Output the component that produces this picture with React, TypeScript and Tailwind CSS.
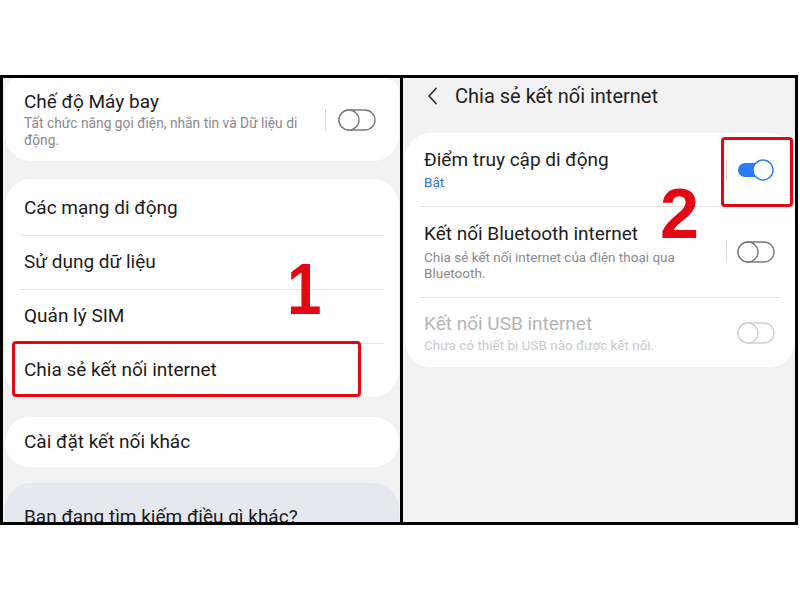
import React from "react";

const RED = "#e30613";

function ToggleOff({ disabled = false }: { disabled?: boolean }) {
  const c = disabled ? "#cfcfcf" : "#7a7a7a";
  return (
    <svg width="38" height="22" viewBox="0 0 38 22">
      <rect x="1" y="1" width="36" height="20" rx="10" fill="none" stroke={c} strokeWidth="1.4" />
      <circle cx="11" cy="11" r="10" fill="#fff" stroke={c} strokeWidth="1.4" />
    </svg>
  );
}

function ToggleOn() {
  return (
    <svg width="38" height="22" viewBox="0 0 38 22">
      <rect x="1" y="4" width="30" height="14" rx="7" fill="#2a7bf4" />
      <circle cx="26" cy="11" r="10" fill="#fff" stroke="#2a7bf4" strokeWidth="1.4" />
    </svg>
  );
}

function Divider({ className = "" }: { className?: string }) {
  return <div className={"h-px shrink-0 bg-[#e3e3e3] " + className} />;
}

export default function App() {
  return (
    <div
      className="w-[800px] h-[600px] bg-white overflow-hidden"
      style={{ fontFamily: "Roboto, 'Noto Sans', sans-serif" }}
    >
      <div className="mt-[75px] w-[798px] h-[450px] border-[3px] border-black flex">
        {/* LEFT PANEL */}
        <div className="relative w-[397px] h-full bg-[#f2f2f2] overflow-hidden flex flex-col">
          {/* Card 1 */}
          <div className="shrink-0 ml-[2px] mr-[1px] bg-white rounded-b-[26px] rounded-t-[14px] pt-[12px] pb-[12px] pl-[19px] pr-[23px] flex items-center">
            <div className="w-[292px]">
              <div className="text-[19px] leading-[24px] text-[#1c1c1c]">Chế độ Máy bay</div>
              <div className="mt-[1px] text-[13.8px] leading-[17px] text-[#8a8a8a]">
                Tất chức năng gọi điện, nhắn tin và Dữ liệu di động.
              </div>
            </div>
            <div className="ml-auto flex items-center">
              <div className="w-px h-[21px] bg-[#d9d9d9] mr-[12px]" />
              <ToggleOff />
            </div>
          </div>

          {/* Card 2 */}
          <div className="shrink-0 mt-[18px] ml-[2px] mr-[1px] bg-white rounded-[26px] flex flex-col">
            <div className="shrink-0 h-[56px] pt-[3px] pl-[19px] flex items-center text-[19px] text-[#1c1c1c]">Các mạng di động</div>
            <Divider className="mx-[15px]" />
            <div className="shrink-0 h-[53px] pl-[19px] flex items-center text-[19px] text-[#1c1c1c]">Sử dụng dữ liệu</div>
            <Divider className="mx-[15px]" />
            <div className="shrink-0 h-[53px] pl-[19px] flex items-center text-[19px] text-[#1c1c1c]">Quản lý SIM</div>
            <Divider className="mx-[15px]" />
            <div className="relative shrink-0 h-[53px] pl-[19px] flex items-center text-[19px] text-[#1c1c1c]">
              Chia sẻ kết nối internet
              <div
                className="absolute left-[7px] top-[-3px] w-[349px] h-[56px] rounded-[4px] border-[3px]"
                style={{ borderColor: RED }}
              />
            </div>
          </div>

          {/* Card 3 */}
          <div className="shrink-0 mt-[20px] ml-[2px] mr-[1px] h-[50px] bg-white rounded-[26px] pl-[19px] flex items-center text-[19px] text-[#1c1c1c]">
            Cài đặt kết nối khác
          </div>

          {/* Card 4 */}
          <div className="shrink-0 mt-[16px] ml-[2px] mr-[1px] h-[80px] bg-[#e5e9ef] rounded-t-[26px] pt-[22px] pl-[19px] text-[19px] leading-[24px] text-[#1c1c1c]">
            Bạn đang tìm kiếm điều gì khác?
          </div>

          {/* number 1 */}
          <div
            className="absolute left-[281px] top-[174px] text-[73px] leading-none font-bold"
            style={{ fontFamily: "'Liberation Sans', Arial, sans-serif", color: RED, transform: "scaleX(0.85)" }}
          >
            1
          </div>
        </div>

        {/* middle divider */}
        <div className="w-[3px] h-full bg-black" />

        {/* RIGHT PANEL */}
        <div className="relative flex-1 h-full bg-[#f2f2f2] flex flex-col">
          <div className="shrink-0 h-[55px] pt-[5px] pl-[23px] flex items-start">
            <div className="h-[26px] flex items-center">
              <svg width="14" height="18" viewBox="0 0 14 18">
                <polyline points="10,1.5 3,9 10,16.5" fill="none" stroke="#333" strokeWidth="1.8" strokeLinecap="round" strokeLinejoin="round" />
              </svg>
            </div>
            <div className="ml-[15px] text-[20px] leading-[26px] text-[#222]">Chia sẻ kết nối internet</div>
          </div>

          <div className="shrink-0 ml-[2px] bg-white rounded-[26px] flex flex-col">
            {/* row 1 */}
            <div className="pt-[15px] pb-[15px] pl-[19px] pr-[20px] flex items-center">
              <div className="w-[285px]">
                <div className="text-[19px] leading-[24px] text-[#1c1c1c]">Điểm truy cập di động</div>
                <div className="mt-[2px] text-[13.5px] leading-[17px] text-[#2f6fd4]">Bật</div>
              </div>
              <div className="ml-auto flex items-center">
                <div className="w-px h-[21px] bg-[#d9d9d9] mr-[10px]" />
                <ToggleOn />
              </div>
            </div>
            <Divider className="mx-[15px]" />
            {/* row 2 */}
            <div className="pt-[15px] pb-[16px] pl-[19px] pr-[20px] flex items-center">
              <div className="w-[285px]">
                <div className="text-[19px] leading-[24px] text-[#1c1c1c]">Kết nối Bluetooth internet</div>
                <div className="mt-[3px] text-[13.5px] leading-[16px] text-[#8a8a8a]">
                  Chia sẻ kết nối internet của điện thoại qua Bluetooth.
                </div>
              </div>
              <div className="ml-auto flex items-center">
                <div className="w-px h-[21px] bg-[#d9d9d9] mr-[10px]" />
                <ToggleOff />
              </div>
            </div>
            <Divider className="mx-[15px]" />
            {/* row 3 */}
            <div className="pt-[14px] pb-[13px] pl-[19px] pr-[20px] flex items-center">
              <div className="w-[285px]">
                <div className="text-[19px] leading-[24px] text-[#b5b5b5]">Kết nối USB internet</div>
                <div className="mt-[1px] text-[13.5px] leading-[17px] text-[#c9c9c9]">
                  Chưa có thiết bị USB nào được kết nối.
                </div>
              </div>
              <div className="ml-auto flex items-center">
                <ToggleOff disabled />
              </div>
            </div>
          </div>

          {/* red box 2 */}
          <div
            className="absolute left-[318px] top-[59px] w-[72px] h-[70px] rounded-[4px] border-[3px]"
            style={{ borderColor: RED }}
          />
          {/* number 2 */}
          <div
            className="absolute left-[257px] top-[101px] text-[70px] leading-none font-bold"
            style={{ fontFamily: "'Liberation Sans', Arial, sans-serif", color: RED }}
          >
            2
          </div>
        </div>
      </div>
    </div>
  );
}
